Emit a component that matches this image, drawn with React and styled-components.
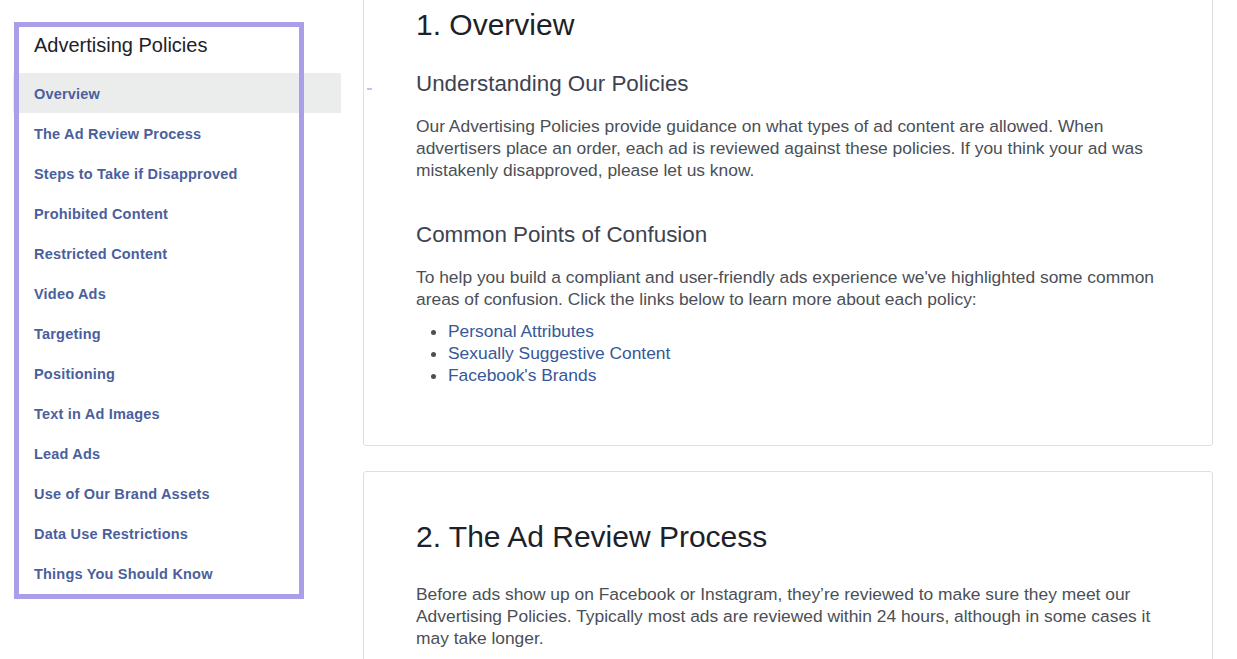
import React from "react";
import styled, { createGlobalStyle } from "styled-components";

const GlobalStyle = createGlobalStyle`
  html, body {
    margin: 0;
    padding: 0;
    background: #fff;
    overflow: hidden;
  }
  body {
    font-family: "Liberation Sans", Arial, Helvetica, sans-serif;
  }
`;

const navItems = [
  "Overview",
  "The Ad Review Process",
  "Steps to Take if Disapproved",
  "Prohibited Content",
  "Restricted Content",
  "Video Ads",
  "Targeting",
  "Positioning",
  "Text in Ad Images",
  "Lead Ads",
  "Use of Our Brand Assets",
  "Data Use Restrictions",
  "Things You Should Know",
];

function App() {
  return (
    <>
      <GlobalStyle />
      <Page>
        <Sidebar>
          <SideTitle>Advertising Policies</SideTitle>
          <NavList>
            {navItems.map((item, i) => (
              <NavItem key={item} active={i === 0}>
                {item}
              </NavItem>
            ))}
          </NavList>
          <Highlight />
        </Sidebar>

        <Main>
          <Card first>
            <Marker />
            <H1>1. Overview</H1>
            <H2>Understanding Our Policies</H2>
            <Para>
              Our Advertising Policies provide guidance on what types of ad
              content are allowed. When advertisers place an order, each ad is
              reviewed against these policies. If you think your ad was
              mistakenly disapproved, please let us know.
            </Para>
            <H2 spaced>Common Points of Confusion</H2>
            <Para>
              To help you build a compliant and user-friendly ads experience
              we've highlighted some common areas of confusion. Click the links
              below to learn more about each policy:
            </Para>
            <Bullets>
              <li>
                <Link href="#">Personal Attributes</Link>
              </li>
              <li>
                <Link href="#">Sexually Suggestive Content</Link>
              </li>
              <li>
                <Link href="#">Facebook's Brands</Link>
              </li>
            </Bullets>
          </Card>

          <Card>
            <H1 second>2. The Ad Review Process</H1>
            <Para>
              Before ads show up on Facebook or Instagram, they’re reviewed to
              make sure they meet our Advertising Policies. Typically most ads
              are reviewed within 24 hours, although in some cases it may take
              longer.
            </Para>
          </Card>
        </Main>
      </Page>
    </>
  );
}

export default App;

const Page = styled.div`
  display: flex;
  align-items: flex-start;
  gap: 22px;
  height: 659px;
  overflow: hidden;
`;

const Sidebar = styled.nav`
  position: relative;
  width: 328px;
  margin-left: 13px;
  flex-shrink: 0;
`;

const SideTitle = styled.div`
  box-sizing: border-box;
  height: 73px;
  padding: 33px 0 0 21px;
  font-size: 20px;
  line-height: 24px;
  color: #1d2129;
`;

const NavList = styled.ul`
  list-style: none;
  margin: 0;
  padding: 0;
`;

const NavItem = styled.li`
  height: 40px;
  display: flex;
  align-items: center;
  padding: 1px 0 0 21px;
  box-sizing: border-box;
  font-size: 14.5px;
  font-weight: bold;
  letter-spacing: 0.2px;
  color: #4a609c;
  background: ${(p) => (p.active ? "#ebedec" : "transparent")};
  cursor: pointer;
`;

const Highlight = styled.div`
  position: absolute;
  left: 1px;
  top: 22px;
  width: 290px;
  height: 577px;
  box-sizing: border-box;
  border: 5px solid #ab9ee8;
  pointer-events: none;
`;

const Main = styled.main`
  width: 850px;
  flex-shrink: 0;
  display: flex;
  flex-direction: column;
  gap: 25px;
  margin-top: -20px;
`;

const Card = styled.section`
  position: relative;
  background: #fff;
  border: 1px solid #dddfe2;
  border-radius: 3px;
  padding: ${(p) => (p.first ? "26px" : "47px")} 52px 59px;
`;

const Marker = styled.span`
  position: absolute;
  left: 3px;
  top: 107px;
  width: 5px;
  height: 2px;
  background: #c9c0f0;
`;

const H1 = styled.h1`
  margin: 0 0 ${(p) => (p.second ? "28px" : "27px")};
  font-size: 30px;
  line-height: 36px;
  font-weight: normal;
  color: #1d2129;
`;

const H2 = styled.h2`
  margin: ${(p) => (p.spaced ? "40px" : "0")} 0 17px;
  font-size: 22.4px;
  line-height: 28px;
  font-weight: normal;
  color: #3d4350;
`;

const Para = styled.p`
  margin: 0 0 10px;
  font-size: 17.4px;
  line-height: 22px;
  color: #4b4f56;
  max-width: 756px;
`;

const Bullets = styled.ul`
  margin: 0;
  padding-left: 32px;
  font-size: 17.4px;
  line-height: 22px;
  color: #4b4f56;
`;

const Link = styled.a`
  color: #365899;
  text-decoration: none;
`;
